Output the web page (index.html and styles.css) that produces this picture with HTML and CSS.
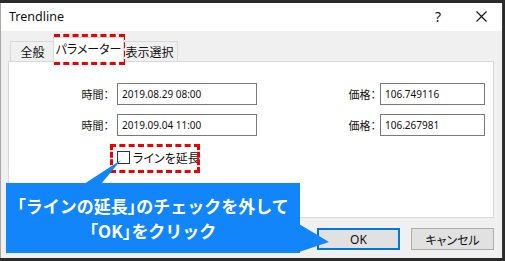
FILE: index.html
```html
<!DOCTYPE html>
<html lang="ja">
<head>
  <meta charset="UTF-8">
  <title>Trendline</title>
  <link rel="stylesheet" href="styles.css">
</head>
<body>
  <div class="screen">
    <div class="dialog">
      <div class="titlebar">
        <span class="title">Trendline</span>
        <span class="help">?</span>
        <svg class="close" width="11" height="11" viewBox="0 0 11 11">
          <path d="M0.5 0.5 L10.5 10.5 M10.5 0.5 L0.5 10.5" stroke="#111" stroke-width="1.1" fill="none"/>
        </svg>
      </div>

      <div class="body">
        <div class="tabs">
          <div class="tab tab-general">全般</div>
          <div class="tab tab-params active">パラメーター</div>
          <div class="tab tab-view">表示選択</div>
        </div>

        <div class="panel">
          <div class="fields">
            <label class="lbl">時間：</label>
            <div class="input">2019.08.29 08:00</div>
            <label class="lbl lbl-price">価格：</label>
            <div class="input">106.749116</div>

            <label class="lbl">時間：</label>
            <div class="input">2019.09.04 11:00</div>
            <label class="lbl lbl-price">価格：</label>
            <div class="input">106.267981</div>
          </div>

          <div class="extend">
            <span class="checkbox"></span>
            <span class="extend-text">ラインを延長</span>
          </div>
        </div>

        <div class="buttons">
          <div class="btn btn-ok">OK</div>
          <div class="btn">キャンセル</div>
        </div>
      </div>
    </div>

    <!-- annotations -->
    <div class="mark mark-tab"></div>
    <div class="mark mark-check"></div>

    <div class="callout">
      <div><span class="kakko">「</span>ラインの延長<span class="kakko">」</span>のチェックを外して</div>
      <div><span class="kakko">「</span>OK<span class="kakko">」</span>をクリック</div>
    </div>

    <svg class="pointers" width="505" height="261" viewBox="0 0 505 261">
      <polygon points="84,184 101,184 121,160" fill="#1185f9"/>
      <polygon points="299,224 329,242 299,252" fill="#1185f9"/>
    </svg>
  </div>
</body>
</html>
```

FILE: styles.css
```css
body {
  margin: 0;
  padding: 0;
  background: #2a2a2a;
  font-family: "Noto Sans CJK JP", "Noto Sans", sans-serif;
  color: #111;
}

.screen {
  position: relative;
  width: 505px;
  height: 261px;
  overflow: hidden;
  background: #2a2a2a;
}

.dialog {
  margin-top: 3px;
  width: 503px;
  height: 255px;
  box-sizing: border-box;
  border-left: 1px solid #a8a8a8;
  border-right: 1px solid #3a3a3a;
  background: #f0f0f0;
  display: flex;
  flex-direction: column;
}

.titlebar {
  height: 28px;
  background: #fff;
  display: flex;
  align-items: center;
  padding-left: 8px;
}

.title {
  font-family: "Noto Sans", sans-serif;
  font-size: 12.5px;
  margin-top: -1px;
}

.help {
  margin-left: auto;
  margin-right: 35px;
  font-family: "Noto Sans", sans-serif;
  font-size: 14px;
  margin-top: -2px;
}

.close {
  margin-right: 15px;
  margin-top: -2px;
}

.body {
  padding: 10px 8px 0 7px;
}

.tabs {
  display: flex;
  align-items: flex-end;
  height: 20px;
  padding-left: 2px;
  font-size: 12px;
  font-feature-settings: "palt";
}

.tab {
  height: 20px;
  box-sizing: border-box;
  border: 1px solid #d9d9d9;
  border-bottom: none;
  background: #f0f0f0;
  display: flex;
  align-items: center;
  justify-content: center;
}

.tab-general { width: 45px; }
.tab-params { width: 67px; }
.tab-view { width: 56px; border-left: none; }

.tab.active {
  position: relative;
  z-index: 1;
  width: 71px;
  height: 25px;
  margin: 0 -2px -1px;
  background: #fff;
  padding-bottom: 3px;
}

.panel {
  height: 157px;
  box-sizing: border-box;
  border: 1px solid #d9d9d9;
  background: #fff;
  padding-top: 21px;
}

.fields {
  display: grid;
  grid-template-columns: 108px 140px 123px 105px;
  grid-auto-rows: 22px;
  row-gap: 9px;
}

.lbl {
  font-size: 11px;
  font-feature-settings: "palt";
  text-align: right;
  padding-right: 8px;
  line-height: 22px;
}

.lbl-price {
  padding-right: 4px;
}

.input {
  box-sizing: border-box;
  border: 1px solid #7a7a7a;
  background: #fff;
  font-family: "Noto Sans", sans-serif;
  font-size: 10px;
  line-height: 20px;
  padding-left: 4px;
}

.extend {
  margin-top: 13px;
  margin-left: 108px;
  height: 16px;
  display: flex;
  align-items: center;
  font-size: 12px;
  font-feature-settings: "palt";
}

.checkbox {
  width: 13px;
  height: 13px;
  box-sizing: border-box;
  border: 1px solid #333;
  background: #fff;
  margin-right: 3px;
}

.buttons {
  display: flex;
  justify-content: flex-end;
  gap: 11px;
  margin-top: 10px;
}

.btn {
  width: 83px;
  height: 22px;
  box-sizing: border-box;
  border: 1px solid #adadad;
  background: #e1e1e1;
  font-size: 12px;
  font-feature-settings: "palt";
  display: flex;
  align-items: center;
  justify-content: center;
}

.btn-ok {
  border: 2px solid #0078d7;
  font-family: "Noto Sans", sans-serif;
}

.mark {
  position: absolute;
  box-sizing: border-box;
  border: 3px dashed #ee0000;
}

.mark-tab {
  left: 54px;
  top: 34px;
  width: 71px;
  height: 31px;
}

.mark-check {
  left: 110px;
  top: 144px;
  width: 90px;
  height: 29px;
}

.callout {
  position: absolute;
  left: 6px;
  top: 183px;
  width: 294px;
  height: 70px;
  background: #1185f9;
  color: #fff;
  font-weight: bold;
  font-size: 17px;
  line-height: 25px;
  text-align: center;
  display: flex;
  flex-direction: column;
  justify-content: center;
}

.kakko {
  font-feature-settings: "palt";
}

.pointers {
  position: absolute;
  left: 0;
  top: 0;
  pointer-events: none;
}
```
